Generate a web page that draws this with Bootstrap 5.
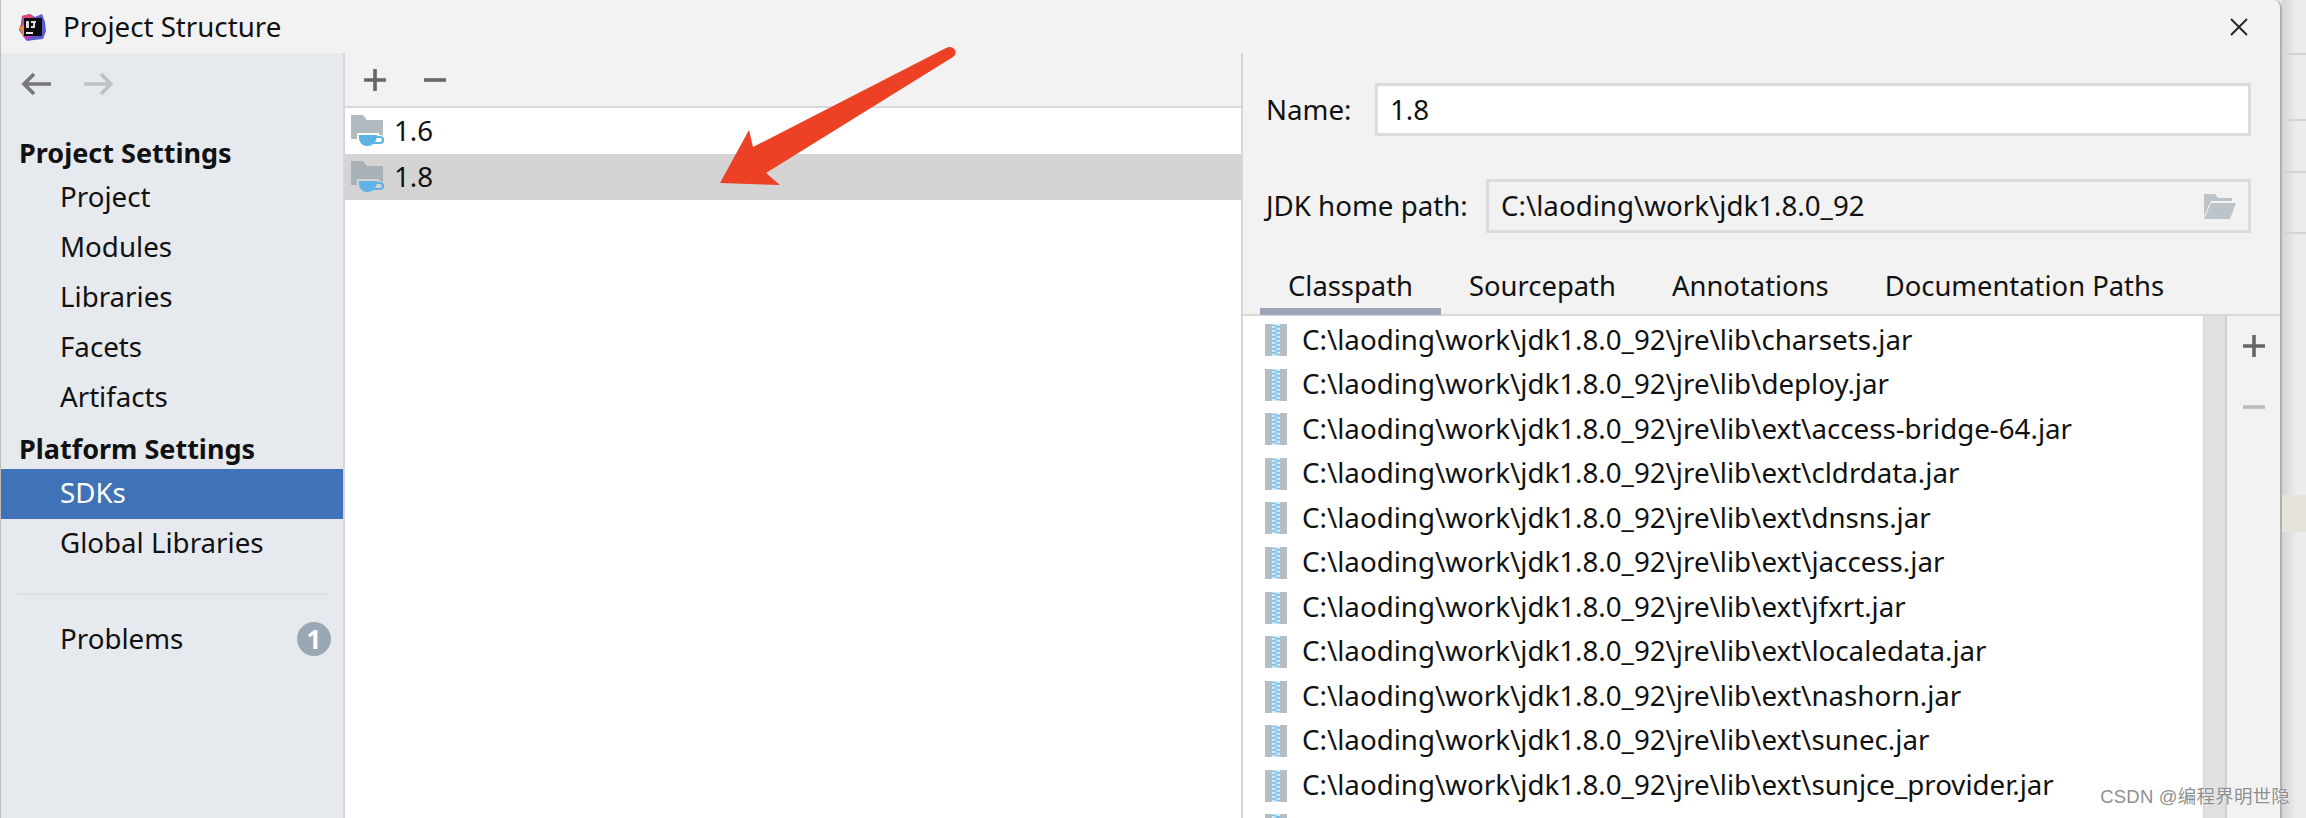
<!DOCTYPE html>
<html lang="en">
<head>
<meta charset="utf-8">
<title>Project Structure</title>
<link rel="stylesheet" href="https://cdn.jsdelivr.net/npm/bootstrap@5.3.0/dist/css/bootstrap.min.css">
<style>
html,body{height:818px;overflow:hidden;}
body{font-family:"Noto Sans","Open Sans","Liberation Sans",sans-serif;font-size:27.7px;color:#111;background:#e9e9e9;}
.shell{height:818px;}
.win{width:2282px;height:818px;background:#f2f2f2;border-left:1px solid #bdbdbd;border-right:2px solid #b0b0b0;border-top-right-radius:8px;flex:none;}
.titlebar{height:53px;padding-left:16px;padding-right:32px;flex:none;}
.title-text{margin-left:16px;}
.closer{width:18px;height:18px;color:#222;}
.fill{min-height:0;}
.side{width:344px;background:#e6e9ee;border-right:2px solid #d4d6d9;flex:none;}
.navarrows{height:62px;padding-left:20px;gap:33px;flex:none;}
.sec-head{font-weight:700;font-size:27px;padding-left:18px;}
.sec-head.first{margin-top:16px;height:42px;line-height:43px;}
.sec-head.second{height:46px;line-height:52px;}
.item{padding-left:59px;height:50px;line-height:47px;flex:none;}
.item.on{background:#4072b8;color:#fff;}
.item.prob{padding-bottom:3px;}
.rule{height:2px;background:#dcdee1;margin:24px 14px 20px 16px;flex:none;}
.count{width:34px;height:34px;border-radius:50%;background:#9aa7b4;color:#fff;font-weight:700;font-size:26px;line-height:34px;margin-right:12px;}
.mid{width:898px;border-right:2px solid #d4d6d9;flex:none;}
.toolrow{height:53px;padding-left:18px;gap:36px;flex:none;}
.sdklist{background:#fff;border-top:2px solid #d8d8d8;flex:1;}
.sdk{height:46px;padding-left:6px;gap:9px;}
.sdk.on{background:#d4d4d4;}
.right{flex:1;min-width:0;}
.formrow{padding:30px 29px 0 23px;flex:none;}
.formrow.jdk{padding-top:43px;}
.lbl-name{width:109px;flex:none;}
.lbl-jdk{width:220px;flex:none;}
.fld{height:53px;border:3px solid #dcdcdc;padding-left:12px;flex:1;min-width:0;background:#fff;}
.fld.ro{height:54px;background:#f2f2f2;padding-right:12px;}
.tabsrow{margin-top:26px;height:57px;border-bottom:2px solid #d8d8d8;padding-left:17px;flex:none;font-size:27.4px;}
.tabx{height:55px;padding:0 28px;position:relative;line-height:54px;}
.tabx.on::after{content:"";position:absolute;left:0;right:0;bottom:-1px;height:7px;background:#9ba7b8;}
.libwrap{flex:1;min-height:0;}
.libs{background:#fff;flex:1;padding:2px 0 0 22px;overflow:hidden;min-width:0;}
.lib{height:44.55px;flex:none;gap:15px;white-space:nowrap;}
.lib span{padding-bottom:2px;}
.bar{width:24px;background:#e0e0e0;border-left:1px solid #d8d8d8;border-right:2px solid #d0d0d0;flex:none;}
.sidetools{width:53px;flex:none;padding-top:18px;gap:37px;}
.outer{flex:1;position:relative;background:linear-gradient(90deg,#d4d4d4,#ececec 60%);}
.seg{border-bottom:2px solid #d4d4d4;flex:none;}
.seg-a{height:55px;}
.seg-b{height:66px;}
.seg-c{height:52px;}
.seg-d{height:61px;}
.seg-e{height:261px;}
.band{height:37px;flex:none;background:#e6e4da;}
.wm{position:absolute;right:16px;bottom:7px;font-size:18.5px;color:#8f8f8f;font-family:"Liberation Sans","Noto Sans CJK SC",sans-serif;letter-spacing:.2px;white-space:nowrap;text-shadow:0 0 2px #fff;}
.pointer{position:absolute;left:0;top:0;pointer-events:none;}
</style>
</head>
<body>
<div class="shell d-flex position-relative">
  <div class="win d-flex flex-column">
    <div class="titlebar d-flex align-items-center">
      <svg width="30" height="30" viewBox="0 0 30 30"><path d="M5 4l8-2 5 3 7-3 3 8 1 9-3 8-9 1-7 1-4-5-4-6 2-6z" fill="#5b5bd6"/><path d="M5 4l8-2 4 4-6 12-7-3 2-6z" fill="#ec4476"/><path d="M2 15l6-2 2 9-4 2z" fill="#f58a3a"/><path d="M6 24l5-4 5 5-7 3z" fill="#b33fc4"/><rect x="7" y="6" width="18" height="18" fill="#0c0c0c"/><rect x="9" y="20" width="7" height="2" fill="#eee"/><rect x="9" y="9" width="3" height="7" fill="#ddd"/><path d="M14 9h5v2h-1v5h-4v-2h2v-3h-2z" fill="#ddd"/></svg>
      <span class="title-text">Project Structure</span>
      <svg class="closer ms-auto" viewBox="0 0 18 18"><path d="M1 1l16 16M17 1L1 17" stroke="currentColor" stroke-width="1.8" fill="none"/></svg>
    </div>
    <div class="d-flex flex-grow-1 fill">
      <div class="side d-flex flex-column">
        <div class="navarrows d-flex align-items-center">
          <svg width="30" height="24" viewBox="0 0 30 24"><path d="M30 12H3M13 2L3 12l10 10" stroke="#777" stroke-width="3.6" fill="none"/></svg>
          <svg width="30" height="24" viewBox="0 0 30 24"><path d="M0 12h27M17 2l10 10-10 10" stroke="#bfc1c4" stroke-width="3.6" fill="none"/></svg>
        </div>
        <div class="sec-head first">Project Settings</div>
        <div class="item">Project</div>
        <div class="item">Modules</div>
        <div class="item">Libraries</div>
        <div class="item">Facets</div>
        <div class="item">Artifacts</div>
        <div class="sec-head second">Platform Settings</div>
        <div class="item on">SDKs</div>
        <div class="item">Global Libraries</div>
        <div class="rule"></div>
        <div class="item prob d-flex justify-content-between align-items-center">Problems<span class="count d-flex align-items-center justify-content-center">1</span></div>
      </div>
      <div class="mid d-flex flex-column">
        <div class="toolrow d-flex align-items-center">
          <svg width="24" height="24" viewBox="0 0 24 24"><path d="M12 1v22M1 12h22" stroke="#666" stroke-width="3.6"/></svg>
          <svg width="24" height="24" viewBox="0 0 24 24"><path d="M1 12h22" stroke="#666" stroke-width="3.6"/></svg>
        </div>
        <div class="sdklist">
          <div class="sdk d-flex align-items-center"><svg width="34" height="32" viewBox="0 0 34 32"><use href="#sdkicon"/></svg><span>1.6</span></div>
          <div class="sdk on d-flex align-items-center"><svg width="34" height="32" viewBox="0 0 34 32"><use href="#sdkicon2"/></svg><span>1.8</span></div>
        </div>
      </div>
      <div class="right d-flex flex-column">
        <div class="formrow d-flex align-items-center"><span class="lbl-name">Name:</span><div class="fld d-flex align-items-center">1.8</div></div>
        <div class="formrow jdk d-flex align-items-center"><span class="lbl-jdk">JDK home path:</span><div class="fld ro d-flex align-items-center justify-content-between"><span>C:\laoding\work\jdk1.8.0_92</span>
          <svg width="33" height="25" viewBox="0 0 33 25"><path d="M1 0h11l3 4h14v3H8L1 22z" fill="#bcc4c9"/><path d="M8 9h25l-6 16H1z" fill="#bcc4c9"/></svg></div></div>
        <div class="tabsrow d-flex">
          <div class="tabx on">Classpath</div><div class="tabx">Sourcepath</div><div class="tabx">Annotations</div><div class="tabx">Documentation Paths</div>
        </div>
        <div class="libwrap d-flex">
          <div class="libs d-flex flex-column">
            <div class="lib d-flex align-items-center"><svg width="22" height="32" viewBox="0 0 22 32"><use href="#jaricon"/></svg><span>C:\laoding\work\jdk1.8.0_92\jre\lib\charsets.jar</span></div>
            <div class="lib d-flex align-items-center"><svg width="22" height="32" viewBox="0 0 22 32"><use href="#jaricon"/></svg><span>C:\laoding\work\jdk1.8.0_92\jre\lib\deploy.jar</span></div>
            <div class="lib d-flex align-items-center"><svg width="22" height="32" viewBox="0 0 22 32"><use href="#jaricon"/></svg><span>C:\laoding\work\jdk1.8.0_92\jre\lib\ext\access-bridge-64.jar</span></div>
            <div class="lib d-flex align-items-center"><svg width="22" height="32" viewBox="0 0 22 32"><use href="#jaricon"/></svg><span>C:\laoding\work\jdk1.8.0_92\jre\lib\ext\cldrdata.jar</span></div>
            <div class="lib d-flex align-items-center"><svg width="22" height="32" viewBox="0 0 22 32"><use href="#jaricon"/></svg><span>C:\laoding\work\jdk1.8.0_92\jre\lib\ext\dnsns.jar</span></div>
            <div class="lib d-flex align-items-center"><svg width="22" height="32" viewBox="0 0 22 32"><use href="#jaricon"/></svg><span>C:\laoding\work\jdk1.8.0_92\jre\lib\ext\jaccess.jar</span></div>
            <div class="lib d-flex align-items-center"><svg width="22" height="32" viewBox="0 0 22 32"><use href="#jaricon"/></svg><span>C:\laoding\work\jdk1.8.0_92\jre\lib\ext\jfxrt.jar</span></div>
            <div class="lib d-flex align-items-center"><svg width="22" height="32" viewBox="0 0 22 32"><use href="#jaricon"/></svg><span>C:\laoding\work\jdk1.8.0_92\jre\lib\ext\localedata.jar</span></div>
            <div class="lib d-flex align-items-center"><svg width="22" height="32" viewBox="0 0 22 32"><use href="#jaricon"/></svg><span>C:\laoding\work\jdk1.8.0_92\jre\lib\ext\nashorn.jar</span></div>
            <div class="lib d-flex align-items-center"><svg width="22" height="32" viewBox="0 0 22 32"><use href="#jaricon"/></svg><span>C:\laoding\work\jdk1.8.0_92\jre\lib\ext\sunec.jar</span></div>
            <div class="lib d-flex align-items-center"><svg width="22" height="32" viewBox="0 0 22 32"><use href="#jaricon"/></svg><span>C:\laoding\work\jdk1.8.0_92\jre\lib\ext\sunjce_provider.jar</span></div>
            <div class="lib d-flex align-items-center"><svg width="22" height="32" viewBox="0 0 22 32"><use href="#jaricon"/></svg></div>
          </div>
          <div class="bar"></div>
          <div class="sidetools d-flex flex-column align-items-center">
            <svg width="24" height="24" viewBox="0 0 24 24"><path d="M12 1v22M1 12h22" stroke="#666" stroke-width="3.6"/></svg>
            <svg width="24" height="24" viewBox="0 0 24 24"><path d="M1 12h22" stroke="#bbb" stroke-width="3.6"/></svg>
          </div>
        </div>
      </div>
    </div>
  </div>
  <div class="outer d-flex flex-column">
    <div class="seg seg-a"></div><div class="seg seg-b"></div><div class="seg seg-c"></div><div class="seg seg-d"></div>
    <div class="seg-e"></div><div class="band"></div>
  </div>
  <span class="wm">CSDN @编程界明世隐</span>
  <svg class="pointer" width="2306" height="818" viewBox="0 0 2306 818"><path d="M946 48Q952 45 955 50Q957 54 953 57L766 173L780 185L720 183L749 130L753 147Z" fill="#ec4125"/></svg>
</div>
<svg width="0" height="0" class="position-absolute">
  <defs>
    <symbol id="sdkicon" viewBox="0 0 34 32"><path d="M0 0h12l4 5h16v19H0z" fill="#b1bac0"/><path d="M6 18h22v2h1a5.5 5.5 0 0 1 0 11h-6a8 8 0 0 1-4 1h-5a9 9 0 0 1-8-9z" fill="#fff"/><path d="M8 20h18v1a9 9 0 0 1-1 4a9 9 0 0 1-8 6h-1a8 8 0 0 1-8-8z" fill="#5eb3e4"/><path d="M25 22h4a3 3 0 0 1 0 6h-7" stroke="#5eb3e4" stroke-width="2.2" fill="none"/></symbol>
    <symbol id="sdkicon2" viewBox="0 0 34 32"><path d="M0 0h12l4 5h16v19H0z" fill="#aab2b9"/><path d="M6 18h22v2h1a5.5 5.5 0 0 1 0 11h-6a8 8 0 0 1-4 1h-5a9 9 0 0 1-8-9z" fill="#d4d4d4"/><path d="M8 20h18v1a9 9 0 0 1-1 4a9 9 0 0 1-8 6h-1a8 8 0 0 1-8-8z" fill="#5eb3e4"/><path d="M25 22h4a3 3 0 0 1 0 6h-7" stroke="#5eb3e4" stroke-width="2.2" fill="none"/></symbol>
    <symbol id="jaricon" viewBox="0 0 22 32"><rect x="0" y="0" width="7" height="32" fill="#b5bec4"/><rect x="15" y="0" width="7" height="32" fill="#b5bec4"/><rect x="7" y="0" width="8" height="32" fill="#d5ecf8"/><path d="M7 1l8 2-8 2 8 2-8 2 8 2-8 2 8 2-8 2 8 2-8 2 8 2-8 2 8 2-8 2 8 2" stroke="#63b5e6" stroke-width="1.2" fill="none"/></symbol>
  </defs>
</svg>
<script src="https://cdn.jsdelivr.net/npm/bootstrap@5.3.0/dist/js/bootstrap.bundle.min.js"></script>
</body>
</html>
